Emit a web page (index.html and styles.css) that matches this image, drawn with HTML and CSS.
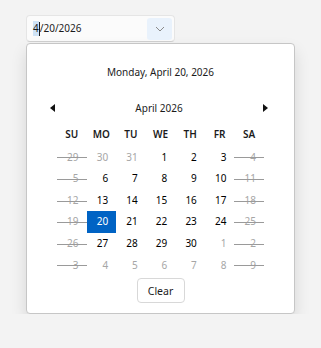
FILE: index.html
```html
<!DOCTYPE html>
<html lang="en">

<head>
    <meta charset="UTF-8">
    <title>Date Picker</title>
    <link rel="stylesheet" href="styles.css">
</head>

<body>
    <div class="picker">
        <!-- Date Input -->
        <div class="date-input">
            <span class="date-text"><span class="sel">4</span><span class="caret"></span>/20/2026</span>
            <button class="drop-btn">
                <svg width="10" height="6" viewBox="0 0 10 6"><path d="M1 1 L5 5 L9 1" fill="none" stroke="#8a8a8a" stroke-width="1"/></svg>
            </button>
        </div>
        <!-- Calendar Popup -->
        <div class="popup">
            <div class="long-date">Monday, April 20, 2026</div>
            <div class="nav">
                <span class="arrow left"></span>
                <span class="month">April 2026</span>
                <span class="arrow right"></span>
            </div>
            <div class="grid" id="grid">
                <div class="dow">SU</div>
                <div class="dow">MO</div>
                <div class="dow">TU</div>
                <div class="dow">WE</div>
                <div class="dow">TH</div>
                <div class="dow">FR</div>
                <div class="dow">SA</div>
            </div>
            <div class="footer">
                <button class="clear-btn">Clear</button>
            </div>
        </div>
    </div>

    <script>
        // Build the day cells for April 2026
        const grid = document.getElementById('grid');
        const days = [29, 30, 31, 1, 2, 3, 4, 5, 6, 7, 8, 9, 10, 11, 12, 13, 14, 15, 16, 17, 18,
            19, 20, 21, 22, 23, 24, 25, 26, 27, 28, 29, 30, 1, 2, 3, 4, 5, 6, 7, 8, 9];

        days.forEach((d, i) => {
            const cell = document.createElement('div');
            const col = i % 7;
            const inMonth = i >= 3 && i <= 32;
            cell.className = 'day';
            if (!inMonth) cell.classList.add('other');
            if (col === 0 || col === 6) cell.classList.add('blocked');
            if (i === 22) cell.classList.add('selected');
            cell.textContent = d;
            grid.appendChild(cell);
        });
    </script>
</body>

</html>
```

FILE: styles.css
```css
* {
    margin: 0;
    padding: 0;
    box-sizing: border-box;
}

body {
    background-color: #f3f3f3;
    color: #1b1b1b;
    font-family: "Noto Sans", "Segoe UI", sans-serif;
    font-size: 10px;
}

.picker {
    padding: 15px 0 0 26px;
}

.date-input {
    width: 149px;
    height: 27px;
    background-color: #fbfbfb;
    border: 1px solid #e5e5e5;
    border-bottom-color: #d0d0d0;
    border-radius: 4px;
    display: flex;
    align-items: center;
    padding: 0 2px 0 6px;
}

.date-text {
    flex: 1;
    display: flex;
    align-items: center;
    line-height: 15px;
}

.sel {
    background-color: #cfe3f6;
}

.caret {
    width: 1px;
    height: 14px;
    background-color: #1b1b1b;
}

.drop-btn {
    width: 25px;
    height: 22px;
    border: none;
    border-radius: 3px;
    background-color: #e9f2fc;
    display: flex;
    align-items: center;
    justify-content: center;
}

.popup {
    width: 269px;
    margin-top: 1px;
    background-color: #ffffff;
    border: 1px solid #c6c6c6;
    border-radius: 4px;
    box-shadow: 0 8px 16px rgba(0, 0, 0, 0.12);
    padding: 20px 0 10px;
}

.long-date {
    text-align: center;
    line-height: 16px;
}

.nav {
    display: flex;
    align-items: center;
    justify-content: space-between;
    margin-top: 20px;
    padding: 0 26px 0 23px;
    line-height: 16px;
}

.arrow {
    width: 0;
    height: 0;
    border-top: 4px solid transparent;
    border-bottom: 4px solid transparent;
}

.arrow.left {
    border-right: 5px solid #111;
}

.arrow.right {
    border-left: 5px solid #111;
}

.grid {
    width: 207px;
    margin: 9px auto 0;
    display: grid;
    grid-template-columns: repeat(7, 1fr);
    grid-auto-rows: 21.6px;
}

.dow {
    text-align: center;
    font-weight: 600;
    line-height: 18px;
    height: 21px;
}

.day {
    position: relative;
    text-align: right;
    padding-right: 8px;
    line-height: 21.6px;
    color: #000;
}

.day.other {
    color: #a6a6a6;
}

.day.blocked {
    color: #a6a6a6;
}

.day.blocked::after {
    content: "";
    position: absolute;
    left: 0;
    right: 0;
    top: 50%;
    height: 1px;
    background-color: #9a9a9a;
}

.day.selected {
    background-color: #0063c4;
    color: #ffffff;
}

.footer {
    display: flex;
    justify-content: center;
    margin-top: 2px;
}

.clear-btn {
    width: 48px;
    height: 25px;
    background-color: #ffffff;
    border: 1px solid #d8d8d8;
    border-radius: 4px;
    font-family: inherit;
    font-size: 10.5px;
    color: #1b1b1b;
}
```
